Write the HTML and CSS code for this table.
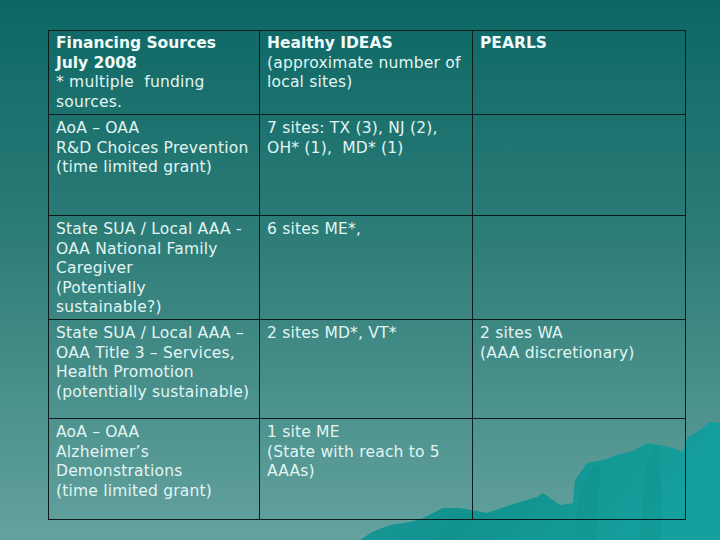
FILE: index.html
```html
<!DOCTYPE html>
<html>
<head>
<meta charset="utf-8">
<link rel="stylesheet" href="styles.css">
</head>
<body>
<div class="slide">
  <svg class="mountains" viewBox="0 0 720 540" preserveAspectRatio="none" aria-hidden="true">
    <defs>
      <linearGradient id="mg" x1="0" y1="0" x2="1" y2="0.3">
        <stop offset="0" stop-color="#1a9b9a"/>
        <stop offset="0.5" stop-color="#11928f"/>
        <stop offset="1" stop-color="#15a09d"/>
      </linearGradient>
    </defs>
    <polygon fill="url(#mg)" points="360,540 372,532 390,525 410,522 423,518 443,508 460,508 487,513 510,505 537,497 543,493 560,505 573,503 575,480 587,463 603,460 617,455 633,451 647,443 660,445 673,448 683,452 687,438 700,430 710,422 720,423 720,540"/>
    <polygon fill="#0e8e8c" opacity="0.35" points="575,540 578,500 590,470 600,465 596,540"/>
    <polygon fill="#0e8e8c" opacity="0.3" points="640,540 645,470 655,446 660,445 662,540"/>
  </svg>
  <table class="grid">
    <colgroup>
      <col class="c1"><col class="c2"><col class="c3">
    </colgroup>
    <tr class="r1">
      <td><b>Financing Sources<br>July 2008</b><br>* multiple&nbsp; funding<br>sources.</td>
      <td><b>Healthy IDEAS</b><br>(approximate number of<br>local sites)</td>
      <td><b>PEARLS</b></td>
    </tr>
    <tr class="r2">
      <td>AoA – OAA<br>R&amp;D Choices Prevention<br>(time limited grant)</td>
      <td>7 sites: TX (3), NJ (2),<br>OH* (1),&nbsp; MD* (1)</td>
      <td></td>
    </tr>
    <tr class="r3">
      <td>State SUA / Local AAA -<br>OAA National Family<br>Caregiver<br>(Potentially<br>sustainable?)</td>
      <td>6 sites ME*,</td>
      <td></td>
    </tr>
    <tr class="r4">
      <td>State SUA / Local AAA –<br>OAA Title 3 – Services,<br>Health Promotion<br>(potentially sustainable)</td>
      <td>2 sites MD*, VT*</td>
      <td>2 sites WA<br>(AAA discretionary)</td>
    </tr>
    <tr class="r5">
      <td>AoA – OAA<br>Alzheimer’s<br>Demonstrations<br>(time limited grant)</td>
      <td>1 site ME<br>(State with reach to 5<br>AAAs)</td>
      <td></td>
    </tr>
  </table>
</div>
</body>
</html>
```
FILE: styles.css
```css
html, body {
  margin: 0;
  padding: 0;
}
.slide {
  position: relative;
  width: 720px;
  height: 540px;
  overflow: hidden;
  background: linear-gradient(to bottom, #0c6764 0%, #2e7d79 45%, #64a29e 100%);
  font-family: "DejaVu Sans", Verdana, sans-serif;
  color: #e2f5f3;
}
.mountains {
  position: absolute;
  left: 0;
  top: 0;
  width: 720px;
  height: 540px;
}
.grid {
  position: relative;
  margin: 30px 0 0 48px;
  border-collapse: collapse;
  table-layout: fixed;
  width: 637px;
  font-size: 15.5px;
  line-height: 19.5px;
  letter-spacing: 0.2px;
}
.c1 { width: 211px; }
.c2 { width: 213px; }
.c3 { width: 213px; }
.grid td {
  border: 1.5px solid #0d1a1a;
  vertical-align: top;
  padding: 3px 6px 0 7px;
  white-space: nowrap;
  overflow: hidden;
}
.grid b {
  font-weight: bold;
  letter-spacing: 0;
  color: #effcfb;
}
.r1 td { height: 80px; }
.r2 td { height: 96px; padding-top: 4px; }
.r3 td { height: 99px; padding-top: 4px; }
.r4 td { height: 94px; padding-top: 4px; }
.r5 td { height: 96px; padding-top: 4px; }
```
